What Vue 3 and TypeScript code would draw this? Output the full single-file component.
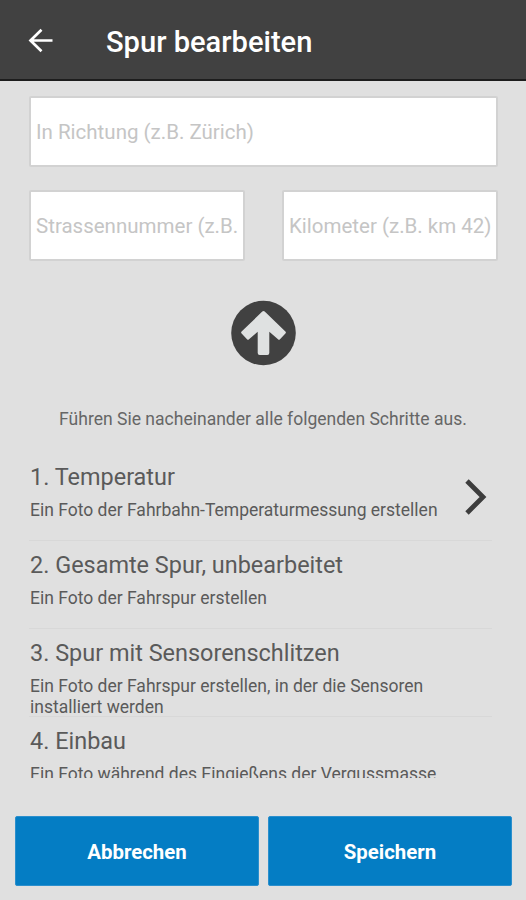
<script setup lang="ts">
interface Step {
  title: string
  text: string
  active?: boolean
}

const steps: Step[] = [
  { title: '1. Temperatur', text: 'Ein Foto der Fahrbahn-Temperaturmessung erstellen', active: true },
  { title: '2. Gesamte Spur, unbearbeitet', text: 'Ein Foto der Fahrspur erstellen' },
  { title: '3. Spur mit Sensorenschlitzen', text: 'Ein Foto der Fahrspur erstellen, in der die Sensoren installiert werden' },
  { title: '4. Einbau', text: 'Ein Foto während des Eingießens der Vergussmasse' },
]
</script>

<template>
  <div class="screen">
    <header class="bar">
      <svg class="back" width="28" height="28" viewBox="0 0 28 28">
        <path d="M26.5 13.5H4M15.5 2.8L4.5 13.5L15.5 24.2" fill="none" stroke="#fff" stroke-width="2.7" />
      </svg>
      <h1 class="heading">Spur bearbeiten</h1>
    </header>

    <section class="fields">
      <div class="field wide"><span class="hint">In Richtung (z.B. Zürich)</span></div>
      <div class="field"><span class="hint">Strassennummer (z.B.</span></div>
      <div class="field"><span class="hint">Kilometer (z.B. km 42)</span></div>
    </section>

    <svg class="direction" width="66" height="66" viewBox="0 0 66 66">
      <circle cx="33.5" cy="33" r="32.3" fill="#414141" />
      <path
        d="M32.3 11.6Q33.5 10.4 34.7 11.6L55.4 31.6Q56.4 32.6 55.4 33.6L50 39.2Q49 40.2 48 39.2L39.3 31.8V53Q39.3 55 37.3 55H29.7Q27.7 55 27.7 53V31.8L19 39.2Q18 40.2 17 39.2L11.6 33.6Q10.6 32.6 11.6 31.6Z"
        fill="#dfe1e1"
      />
    </svg>

    <p class="intro">Führen Sie nacheinander alle folgenden Schritte aus.</p>

    <ol class="steps">
      <li v-for="step in steps" :key="step.title" class="step">
        <div class="body">
          <h2 class="title">{{ step.title }}</h2>
          <p class="text">{{ step.text }}</p>
        </div>
        <svg v-if="step.active" class="chevron" width="24" height="38" viewBox="0 0 24 38">
          <path d="M3 3L19 19L3 35" fill="none" stroke="#3d3d3d" stroke-width="4.8" />
        </svg>
      </li>
    </ol>

    <footer class="actions">
      <button class="action" type="button">Abbrechen</button>
      <button class="action" type="button">Speichern</button>
    </footer>
  </div>
</template>

<style>
body {
  margin: 0;
  background: #e0e0e0;
}
</style>

<style scoped>
.screen {
  display: flex;
  flex-direction: column;
  height: 900px;
  overflow: hidden;
  box-sizing: border-box;
  background: #e0e0e0;
  color: #5a5a5a;
  font-family: Roboto, sans-serif;
}
h1, h2, p, ol {
  margin: 0;
  padding: 0;
  font-weight: 400;
}
.bar {
  display: flex;
  align-items: center;
  flex: none;
  height: 81px;
  box-sizing: border-box;
  padding-left: 26px;
  border-bottom: 2px solid #1d1d1d;
  background: #414141;
}
.back {
  margin-top: 2px;
}
.heading {
  margin: 4px 0 0 52px;
  font-size: 29.1px;
  line-height: 36px;
  font-weight: 500;
  color: #fff;
}
.fields {
  display: grid;
  grid-template-columns: 216px 216px;
  gap: 23px 37px;
  flex: none;
  margin: 15px 0 0 29px;
}
.field {
  display: flex;
  align-items: center;
  height: 71px;
  box-sizing: border-box;
  padding-left: 5px;
  overflow: hidden;
  border: 2px solid #d2d2d2;
  border-radius: 2px;
  background: #fff;
}
.wide {
  grid-column: span 2;
}
.hint {
  font-size: 20.5px;
  line-height: 28px;
  white-space: nowrap;
  color: #c5c5c5;
}
.direction {
  flex: none;
  align-self: center;
  margin-top: 39px;
}
.intro {
  flex: none;
  margin-top: 41px;
  font-size: 17.55px;
  line-height: 24px;
  text-align: center;
  white-space: nowrap;
  color: #666;
}
.steps {
  flex: none;
  height: 325px;
  margin: 22px 34px 0 29px;
  overflow: hidden;
  list-style: none;
}
.step {
  display: flex;
  height: 88px;
  box-sizing: border-box;
  border-bottom: 1px solid #d8d8d8;
}
.body {
  width: 420px;
  flex: none;
  padding: 8px 0 0 1px;
}
.title {
  font-size: 23.45px;
  line-height: 32px;
  white-space: nowrap;
}
.text {
  margin-top: 7px;
  font-size: 17.5px;
  line-height: 21px;
}
.chevron {
  flex: none;
  margin: 25px 0 0 14px;
}
.actions {
  display: grid;
  grid-template-columns: 244px 244px;
  gap: 9px;
  margin: 38px 0 0 15px;
}
.action {
  height: 70px;
  padding: 2px 0 0;
  border: 1px solid #2b8fcd;
  border-radius: 2px;
  background: #047dc4;
  color: #fff;
  font-family: inherit;
  font-size: 20.4px;
  font-weight: 700;
}
</style>
